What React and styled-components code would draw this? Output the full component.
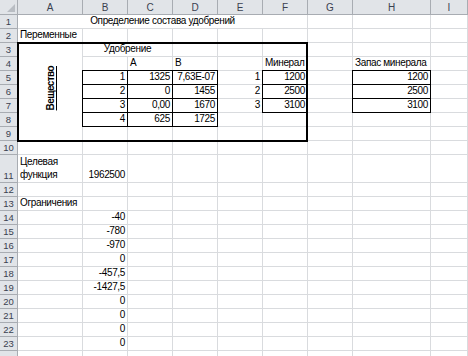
import React from "react";
import styled, { createGlobalStyle } from "styled-components";

const Global = createGlobalStyle`
  html, body { margin: 0; padding: 0; background: #fff; }
  body { width: 468px; height: 356px; overflow: hidden; }
`;

const COLS = ["A", "B", "C", "D", "E", "F", "G", "H", "I"];
const ROWS = Array.from({ length: 24 }, (_, i) => i + 1);
const LAST_VISIBLE = 23;

const GRID = "#d9dbde";
const HEAD_BG = "#e1e4e8";
const HEAD_LINE = "#a8acb2";

const Sheet = styled.div`
  display: grid;
  grid-template-columns: 18px 65px 45px 45px 45px 45px 45px 45px 78px 1fr;
  grid-template-rows: 15px repeat(10, 14px) 28px repeat(13, 14px);
  width: 468px;
  height: 356px;
  overflow: hidden;
  font-family: "Liberation Sans", Arial, sans-serif;
  font-size: 10px;
  letter-spacing: -0.35px;
  color: #000;
  background: #fff;
`;

const Corner = styled.div`
  grid-row: 1;
  grid-column: 1;
  background: ${HEAD_BG};
  border-right: 1px solid ${HEAD_LINE};
  border-bottom: 1px solid ${HEAD_LINE};
  box-sizing: border-box;
  display: flex;
  align-items: flex-end;
  justify-content: flex-end;
  padding: 2px;
`;

const ColHead = styled.div`
  grid-row: 1;
  grid-column: ${(p) => p.$col};
  background: ${HEAD_BG};
  border-right: 1px solid ${HEAD_LINE};
  border-bottom: 1px solid ${HEAD_LINE};
  box-sizing: border-box;
  display: flex;
  align-items: center;
  justify-content: center;
  color: #3a4150;
  font-size: 10px;
  letter-spacing: 0;
`;

const RowHead = styled.div`
  grid-column: 1;
  grid-row: ${(p) => p.$row};
  background: ${HEAD_BG};
  border-right: 1px solid ${HEAD_LINE};
  border-bottom: 1px solid ${HEAD_LINE};
  box-sizing: border-box;
  display: flex;
  align-items: flex-end;
  justify-content: center;
  padding-bottom: 1px;
  color: #3a4150;
  font-size: 9.5px;
  letter-spacing: 0;
`;

const Cell = styled.div`
  grid-column: ${(p) => p.$col} / span ${(p) => p.$cs};
  grid-row: ${(p) => p.$row} / span ${(p) => p.$rs};
  box-sizing: border-box;
  border-right: 1px solid ${(p) => (p.$box ? "#000" : GRID)};
  border-bottom: 1px solid ${(p) => (p.$box ? "#000" : GRID)};
  box-shadow: ${(p) =>
    p.$box
      ? "0 -1px 0 0 #000, -1px 0 0 0 #000, -1px -1px 0 0 #000"
      : "none"};
  display: flex;
  align-items: ${(p) => (p.$valign === "center" ? "center" : "flex-end")};
  justify-content: ${(p) =>
    p.$align === "right" ? "flex-end" : p.$align === "center" ? "center" : "flex-start"};
  padding: 0 2px 1px 2px;
  white-space: ${(p) => (p.$wrap ? "normal" : "nowrap")};
  line-height: 13px;
  overflow: visible;
`;

const Vertical = styled.span`
  writing-mode: vertical-rl;
  transform: rotate(180deg);
  font-weight: bold;
  letter-spacing: -0.6px;
  text-decoration: underline;
  margin-top: -6px;
`;

const Frame = styled.div`
  grid-column: 2 / 8;
  grid-row: 4 / 11;
  margin: -1px 0 -1px -1px;
  border: 2px solid #000;
  pointer-events: none;
`;

const cells = {
  A1: { v: "Определение состава удобрений", align: "center", cs: 6 },
  A2: { v: "Переменные" },
  B3: { v: "Удобрение", align: "center", cs: 2 },
  A3: { v: "Вещество", rs: 7, vertical: true },
  C4: { v: "A" },
  D4: { v: "B" },
  F4: { v: "Минерал" },
  H4: { v: "Запас минерала" },
  B5: { v: "1", align: "right", box: true },
  B6: { v: "2", align: "right", box: true },
  B7: { v: "3", align: "right", box: true },
  B8: { v: "4", align: "right", box: true },
  C5: { v: "1325", align: "right", box: true },
  C6: { v: "0", align: "right", box: true },
  C7: { v: "0,00", align: "right", box: true },
  C8: { v: "625", align: "right", box: true },
  D5: { v: "7,63E-07", align: "right", box: true },
  D6: { v: "1455", align: "right", box: true },
  D7: { v: "1670", align: "right", box: true },
  D8: { v: "1725", align: "right", box: true },
  E5: { v: "1", align: "right" },
  E6: { v: "2", align: "right" },
  E7: { v: "3", align: "right" },
  F5: { v: "1200", align: "right", box: true },
  F6: { v: "2500", align: "right", box: true },
  F7: { v: "3100", align: "right", box: true },
  H5: { v: "1200", align: "right", box: true },
  H6: { v: "2500", align: "right", box: true },
  H7: { v: "3100", align: "right", box: true },
  A11: { v: "Целевая функция", wrap: true },
  B11: { v: "1962500", align: "right" },
  A13: { v: "Ограничения" },
  B14: { v: "-40", align: "right" },
  B15: { v: "-780", align: "right" },
  B16: { v: "-970", align: "right" },
  B17: { v: "0", align: "right" },
  B18: { v: "-457,5", align: "right" },
  B19: { v: "-1427,5", align: "right" },
  B20: { v: "0", align: "right" },
  B21: { v: "0", align: "right" },
  B22: { v: "0", align: "right" },
  B23: { v: "0", align: "right" },
};

function buildCovered() {
  const covered = new Set();
  Object.entries(cells).forEach(([key, c]) => {
    const col = COLS.indexOf(key[0]);
    const row = parseInt(key.slice(1), 10);
    const cs = c.cs || 1;
    const rs = c.rs || 1;
    for (let i = 0; i < cs; i++)
      for (let j = 0; j < rs; j++)
        if (i || j) covered.add(COLS[col + i] + (row + j));
  });
  return covered;
}

export default function App() {
  const covered = buildCovered();
  const items = [];
  ROWS.forEach((r) => {
    items.push(
      <RowHead key={"rh" + r} $row={r + 1}>
        {r <= LAST_VISIBLE ? r : null}
      </RowHead>
    );
    COLS.forEach((c, ci) => {
      const key = c + r;
      if (covered.has(key)) return;
      const cell = cells[key] || {};
      items.push(
        <Cell
          key={key}
          $col={ci + 2}
          $row={r + 1}
          $cs={cell.cs || 1}
          $rs={cell.rs || 1}
          $align={cell.align || (cell.vertical ? "center" : "left")}
          $valign={cell.vertical ? "center" : "bottom"}
          $box={!!cell.box}
          $wrap={!!cell.wrap}
        >
          {cell.vertical ? <Vertical>{cell.v}</Vertical> : cell.v}
        </Cell>
      );
    });
  });

  return (
    <>
      <Global />
      <Sheet>
        <Corner>
          <svg width="8" height="8" viewBox="0 0 8 8">
            <path d="M8 0 L8 8 L0 8 Z" fill="#b9bdc3" />
          </svg>
        </Corner>
        {COLS.map((c, i) => (
          <ColHead key={c} $col={i + 2}>
            {c}
          </ColHead>
        ))}
        {items}
        <Frame />
      </Sheet>
    </>
  );
}
